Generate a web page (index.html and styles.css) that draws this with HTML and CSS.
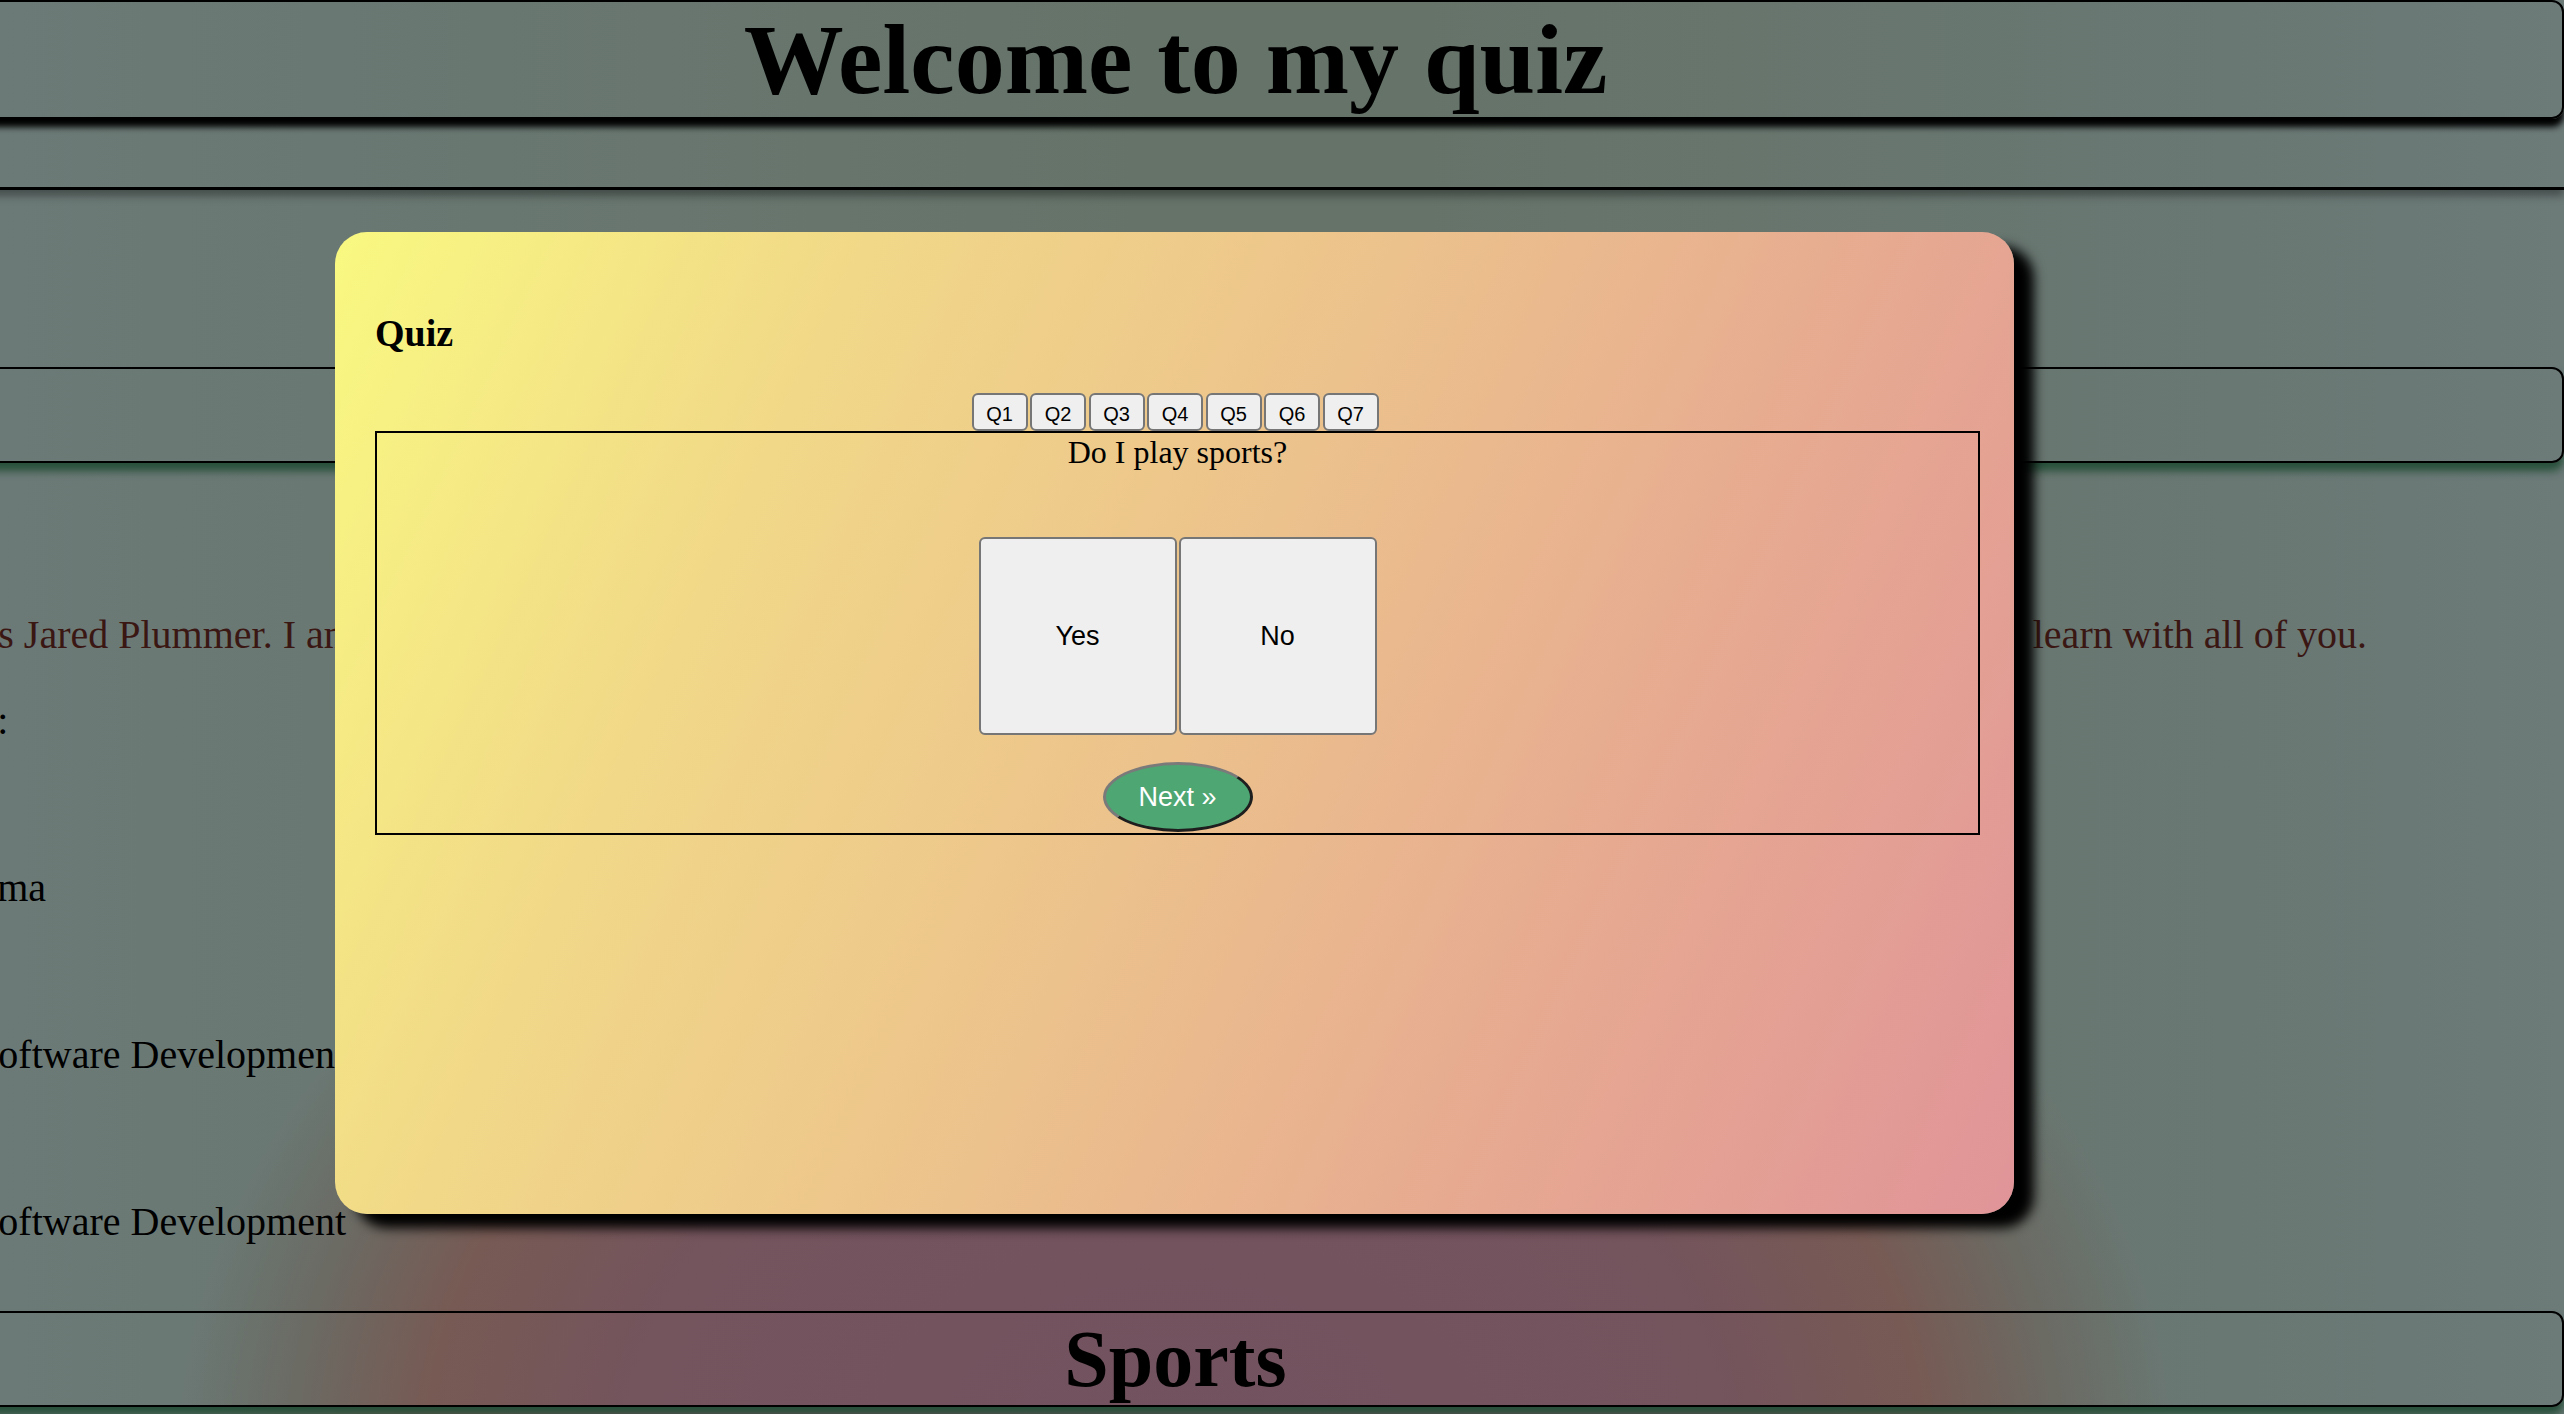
FILE: index.html
```html
<!DOCTYPE html>
<html lang="en">
<head>
<meta charset="utf-8">
<title>Welcome to my quiz</title>
<link rel="stylesheet" href="styles.css">
</head>
<body>
<div class="site">
  <header class="masthead"><h1>Welcome to my quiz</h1></header>
  <nav class="navbar"></nav>
  <section class="banner"></section>
  <h2 class="section-title">About Me</h2>
  <div class="about">
    <p class="intro">My name is Jared Plummer. I am a student learning software development and I'm excited to share this quiz with you, have some fun and learn with all of you.</p>
    <p class="item first">Education :</p>
    <p class="item">H.S. Diploma</p>
    <p class="item">Minor in Software Development</p>
    <p class="item">Minor in Software Development</p>
  </div>
  <h2 class="section-title">Sports</h2>
</div>

<div class="modal">
  <h2 class="modal-title">Quiz</h2>
  <div class="tabs">
    <button class="tab">Q1</button>
    <button class="tab">Q2</button>
    <button class="tab">Q3</button>
    <button class="tab">Q4</button>
    <button class="tab">Q5</button>
    <button class="tab">Q6</button>
    <button class="tab">Q7</button>
  </div>
  <div class="question-box">
    <p class="question">Do I play sports?</p>
    <div class="answers">
      <button class="answer">Yes</button>
      <button class="answer">No</button>
    </div>
    <button class="next">Next &raquo;</button>
  </div>
</div>
</body>
</html>
```

FILE: styles.css
```css
* {
  box-sizing: border-box;
}

html,
body {
  margin: 0;
  padding: 0;
}

body {
  position: relative;
  height: 1414px;
  overflow: hidden;
  font-family: "Liberation Serif", "Times New Roman", serif;
  color: #000;
  background-color: #687772;
  background-image:
    radial-gradient(ellipse 1000px 760px at 1175px 1460px,
      #72525f 0%,
      #74545d 55%,
      #775a54 75%,
      #6b6a63 88%,
      rgba(103, 118, 112, 0) 100%),
    linear-gradient(90deg, #6c7a77 0%, #657369 45%, #657369 55%, #6c7a78 100%);
}

.site {
  margin-left: -213px;
  width: 2777px;
}

.masthead {
  height: 119px;
  border: 2px solid #000;
  border-radius: 12px;
  box-shadow: 0 8px 6px #000;
}

.masthead h1 {
  margin: 0;
  font-size: 100px;
  line-height: 115px;
  font-weight: bold;
  text-align: center;
}

.navbar {
  height: 71px;
  border-bottom: 3px solid #000;
  box-shadow: 0 6px 8px rgba(0, 0, 0, 0.35);
}

.banner {
  height: 177px;
}

.section-title {
  margin: 0;
  height: 96px;
  border: 2px solid #000;
  border-radius: 12px;
  font-size: 80px;
  line-height: 92px;
  font-weight: bold;
  text-align: center;
  box-shadow: 0 8px 8px #27503a;
}

.about {
  padding: 149px 0 66px 38px;
  font-size: 40px;
  line-height: 46px;
}

.about p {
  margin: 0;
  white-space: nowrap;
}

.intro {
  color: #3a1713;
}

.item {
  margin-top: 121px !important;
}

.item.first {
  margin-top: 40px !important;
}

/* Modal */
.modal {
  position: absolute;
  left: 335px;
  top: 232px;
  width: 1679px;
  height: 982px;
  padding: 79px 34px 0 40px;
  border-radius: 32px;
  background: linear-gradient(115deg, #f9f981 0%, #f1d888 25%, #ecc28c 50%, #e6a891 75%, #e09498 100%);
  box-shadow: 20px 14px 12px #000;
}

.modal-title {
  margin: 0;
  font-size: 38px;
  line-height: 44px;
  font-weight: bold;
}

.tabs {
  display: flex;
  justify-content: center;
  gap: 2.5px;
  margin-top: 38px;
  padding-right: 5px;
}

button {
  font-family: "Liberation Sans", Arial, sans-serif;
  color: #000;
  background: #efefef;
  border: 2px solid #767676;
  border-radius: 6px;
  padding: 0;
}

.tab {
  width: 56px;
  height: 38px;
  font-size: 20px;
  padding-top: 4px;
}

.question-box {
  width: 1605px;
  height: 404px;
  border: 2px solid #000;
  display: flex;
  flex-direction: column;
  align-items: center;
}

.question {
  margin: 0;
  font-size: 32px;
  line-height: 38px;
}

.answers {
  display: flex;
  gap: 2px;
  margin-top: 66px;
}

.answer {
  width: 198px;
  height: 198px;
  font-size: 27px;
}

.next {
  margin-top: 27px;
  width: 150px;
  height: 70px;
  border-radius: 50%;
  border: 3px solid;
  border-color: #7a7a7a #1e1e1e #1e1e1e #7a7a7a;
  background: #4ea673;
  color: #fff;
  font-size: 27px;
}
```
